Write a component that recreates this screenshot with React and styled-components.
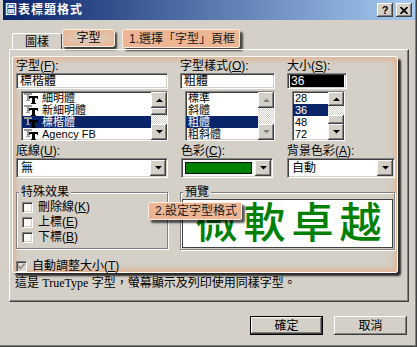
import React from "react";
import styled, { createGlobalStyle, css } from "styled-components";

const GlobalStyle = createGlobalStyle`
  html, body {
    margin: 0;
    padding: 0;
    background: #d4d0c8;
  }
  body {
    font-family: "Liberation Sans", "Noto Sans CJK TC", sans-serif;
    font-size: 12px;
    color: #000;
  }
`;

const raised = css`
  background: #d4d0c8;
  box-shadow: inset -1px -1px #404040, inset 1px 1px #fff,
    inset -2px -2px #808080, inset 2px 2px #d4d0c8;
`;

const sunken = css`
  box-sizing: border-box;
  border-top: 1px solid #808080;
  border-left: 1px solid #808080;
  border-right: 1px solid #fff;
  border-bottom: 1px solid #fff;
  box-shadow: inset 1px 1px #404040, inset -1px -1px #d4d0c8;
`;

const Window = styled.div`
  box-sizing: border-box;
  width: 417px;
  height: 347px;
  padding: 0 1px 0 3px;
  background: #d4d0c8;
  border-right: 1px solid #404040;
  border-bottom: 1px solid #404040;
  box-shadow: inset -1px -1px #808080;
  display: flex;
  flex-direction: column;
`;

const TitleBar = styled.div`
  height: 20px;
  display: flex;
  align-items: center;
  padding: 0 3px 0 2px;
  background: linear-gradient(to right, #0a246a, #a6caf0);
  color: #fff;
  font-weight: bold;
  font-size: 12px;
`;

const TitleText = styled.div`
  flex: 1;
  line-height: 14px;
  letter-spacing: 1px;
`;

const CapBtn = styled.div`
  width: 16px;
  height: 14px;
  margin-left: ${(p) => p.$gap || 0}px;
  ${raised};
  display: flex;
  align-items: center;
  justify-content: center;
  color: #000;
  font: bold 11px "Liberation Sans", sans-serif;
`;

const TabRow = styled.div`
  height: 20px;
  margin-top: 9px;
  margin-left: 9px;
  display: flex;
  align-items: flex-start;
`;

const Tab = styled.div`
  box-sizing: border-box;
  width: 50px;
  height: 17px;
  margin-top: 4px;
  border-top: 1px solid #fff;
  border-left: 1px solid #fff;
  border-right: 1px solid #404040;
  border-radius: 2px 2px 0 0;
  display: flex;
  align-items: center;
  justify-content: center;
  line-height: 12px;
`;

const HotTab = styled.div`
  box-sizing: border-box;
  width: 53px;
  height: 18px;
  border: 1px solid #f6efe8;
  border-radius: 3px;
  background: radial-gradient(ellipse at center, #dccbbd 25%, #ecb08a 100%);
  box-shadow: 2px 3px 2px rgba(0, 0, 0, 0.7);
  display: flex;
  align-items: center;
  justify-content: center;
  line-height: 12px;
`;

const Callout = styled.div`
  box-sizing: border-box;
  width: ${(p) => p.$w}px;
  height: ${(p) => p.$h}px;
  padding-left: 6px;
  background: #edb594;
  border: 1px solid #f8ece2;
  border-radius: 2px;
  box-shadow: 3px 3px 2px rgba(0, 0, 0, 0.65);
  display: flex;
  align-items: center;
  line-height: 12px;
  color: #1a1a1a;
  white-space: nowrap;
`;

const TabCallout = styled(Callout)`
  margin-left: 7px;
`;

const PreviewCallout = styled(Callout)`
  position: absolute;
  left: 132px;
  top: 16px;
  z-index: 2;
`;

const Panel = styled.div`
  box-sizing: border-box;
  width: 400px;
  height: 253px;
  margin-left: 6px;
  padding: 6px 0 0 2px;
  border-top: 1px solid #fff;
  border-left: 1px solid #fff;
  border-right: 1px solid #404040;
  border-bottom: 1px solid #404040;
  box-shadow: inset -1px -1px #808080;
`;

const Frame = styled.div`
  box-sizing: border-box;
  width: 386px;
  height: 217px;
  padding: 3px 0 0 3px;
  border: 1px solid #fff;
  border-radius: 3px;
  box-shadow: inset 0 0 6px 2px rgba(238, 160, 110, 0.7),
    3px 3px 2px rgba(0, 0, 0, 0.8);
`;

const Row = styled.div`
  display: flex;
  gap: ${(p) => p.$gap || 0}px;
  margin-top: ${(p) => p.$mt || 0}px;
  position: relative;
`;

const Col = styled.div`
  width: ${(p) => p.$w}px;
  margin-left: ${(p) => p.$ml || 0}px;
  display: flex;
  flex-direction: column;
`;

const Label = styled.div`
  height: 12px;
  line-height: 12px;
  white-space: nowrap;
`;

const Acc = styled.span`
  text-decoration: underline;
`;

const Field = styled.div`
  ${sunken};
  height: 16px;
  margin-top: 1px;
  padding: 1px 2px;
  background: #fff;
`;

const FieldText = styled.div`
  line-height: 12px;
  height: 12px;
  padding-left: 1px;
  ${(p) =>
    p.$sel &&
    css`
      background: #000;
      color: #fff;
    `}
`;

const ListBox = styled.div`
  ${sunken};
  width: ${(p) => p.$w}px;
  height: 50px;
  margin: 2px 0 0 5px;
  background: #fff;
  display: flex;
`;

const Items = styled.div`
  flex: 1;
  overflow: hidden;
`;

const Item = styled.div`
  height: 12px;
  line-height: 12px;
  font-size: 11px;
  padding-left: 2px;
  display: flex;
  align-items: center;
  gap: 3px;
  white-space: nowrap;
  ${(p) =>
    p.$sel &&
    css`
      background: #0a246a;
      color: #fff;
    `}
`;

const Scroll = styled.div`
  width: 16px;
  flex-shrink: 0;
  display: flex;
  flex-direction: column;
`;

const SBtn = styled.div`
  height: ${(p) => p.$h || 16}px;
  flex-shrink: 0;
  ${raised};
  display: flex;
  align-items: center;
  justify-content: center;
`;

const Track = styled.div`
  flex: ${(p) => (p.$h ? `0 0 ${p.$h}px` : 1)};
  background: repeating-conic-gradient(#d4d0c8 0 25%, #fff 0 50%) 0 0 / 2px
    2px;
`;

const Drop = styled.div`
  ${sunken};
  width: ${(p) => p.$w}px;
  height: 20px;
  margin-top: 1px;
  padding: 1px;
  background: #fff;
  display: flex;
`;

const DropValue = styled.div`
  flex: 1;
  padding-left: 3px;
  line-height: 16px;
`;

const Swatch = styled.div`
  flex: 1;
  margin: 2px 3px 2px 2px;
  background: #008000;
  border: 1px solid #000;
`;

const DropBtn = styled.div`
  width: 16px;
  ${raised};
  display: flex;
  align-items: center;
  justify-content: center;
`;

const Group = styled.fieldset`
  box-sizing: border-box;
  width: ${(p) => p.$w}px;
  height: ${(p) => p.$h}px;
  margin: 0;
  padding: ${(p) => p.$pad};
  border: 1px solid #808080;
  box-shadow: inset 1px 1px #fff, 1px 1px #fff;
`;

const Legend = styled.legend`
  padding: 0 2px;
  margin-left: ${(p) => p.$ml}px;
  line-height: 12px;
  background: #d4d0c8;
`;

const Check = styled.div`
  display: flex;
  align-items: center;
  gap: 5px;
  height: 14px;
  margin-bottom: 1px;
  line-height: 12px;
  white-space: nowrap;
`;

const Box = styled.span`
  ${sunken};
  width: 11px;
  height: 11px;
  flex-shrink: 0;
  background: ${(p) => (p.$off ? "#ddd6cf" : "#fbf7f4")};
  display: flex;
  align-items: center;
  justify-content: center;
`;

const Preview = styled.div`
  box-sizing: border-box;
  height: 49px;
  margin-top: 1px;
  background: #fff;
  border: 1px solid #404040;
  display: flex;
  align-items: center;
  justify-content: center;
  color: #008000;
  font-weight: 500;
  font-size: 42px;
  letter-spacing: 6px;
  line-height: 46px;
  padding-left: 8px;
`;

const Note = styled.div`
  margin: 4px 0 0 3px;
  line-height: 12px;
  white-space: nowrap;
`;

const Latin = styled.span`
  font-family: "Liberation Serif", serif;
`;

const Buttons = styled.div`
  display: flex;
  justify-content: flex-end;
  gap: 11px;
  margin: 14px 8px 0 0;
`;

const Btn = styled.div`
  box-sizing: border-box;
  width: 73px;
  height: 19px;
  ${raised};
  display: flex;
  align-items: center;
  justify-content: center;
  line-height: 12px;
  ${(p) =>
    p.$def &&
    css`
      border: 1px solid #000;
    `}
`;

const Arrow = ({ dir = "up", off }) => (
  <svg width="7" height="4" viewBox="0 0 7 4">
    <polygon
      points={dir === "up" ? "0,4 7,4 3.5,0.5" : "0,0 7,0 3.5,3.5"}
      fill={off ? "#808080" : "#000"}
    />
  </svg>
);

// TrueType logo: a grey T behind a black T
const TTIcon = () => (
  <svg width="15" height="12" viewBox="0 0 15 12" shapeRendering="crispEdges">
    <g fill="#9a9a9a">
      <rect x="0" y="1" width="8" height="2" />
      <rect x="3" y="1" width="2" height="8" />
      <rect x="2" y="8" width="4" height="1" />
    </g>
    <g fill="#000">
      <rect x="5" y="4" width="9" height="2" />
      <rect x="5" y="4" width="1" height="3" />
      <rect x="13" y="4" width="1" height="3" />
      <rect x="8" y="4" width="3" height="7" />
      <rect x="7" y="11" width="5" height="1" />
    </g>
  </svg>
);

const fonts = ["細明體", "新細明體", "標楷體", "Agency FB"];
const styles = ["標準", "斜體", "粗體", "粗斜體"];
const sizes = ["28", "36", "48", "72"];

const CheckRow = ({ label, acc, off, checked }) => (
  <Check>
    <Box $off={off}>
      {checked && (
        <svg width="7" height="7" viewBox="0 0 7 7">
          <path d="M0.5 3 L2.5 5.5 L6.5 1" stroke="#8a8580" strokeWidth="1.5" fill="none" />
        </svg>
      )}
    </Box>
    <span>
      {label}(<Acc>{acc}</Acc>)
    </span>
  </Check>
);

export default function App() {
  return (
    <>
      <GlobalStyle />
      <Window>
        <TitleBar>
          <TitleText>圖表標題格式</TitleText>
          <CapBtn>?</CapBtn>
          <CapBtn $gap={3}>
            <svg width="8" height="7" viewBox="0 0 8 7">
              <path d="M0.5 0 L7.5 7 M7.5 0 L0.5 7" stroke="#000" strokeWidth="1.6" />
            </svg>
          </CapBtn>
        </TitleBar>

        <TabRow>
          <Tab>圖樣</Tab>
          <HotTab>字型</HotTab>
          <TabCallout $w={118} $h={19}>1.選擇「字型」頁框</TabCallout>
        </TabRow>

        <Panel>
          <Frame>
            <Row $gap={12}>
              <Col $w={152}>
                <Label>
                  字型(<Acc>F</Acc>):
                </Label>
                <Field>
                  <FieldText>標楷體</FieldText>
                </Field>
                <ListBox $w={147}>
                  <Items>
                    {fonts.map((f, i) => (
                      <Item key={f} $sel={i === 2}>
                        <TTIcon />
                        <span>{f}</span>
                      </Item>
                    ))}
                  </Items>
                  <Scroll>
                    <SBtn $h={16}>
                      <Arrow dir="up" />
                    </SBtn>
                    <SBtn $h={7} />
                    <Track />
                    <SBtn $h={16}>
                      <Arrow dir="down" />
                    </SBtn>
                  </Scroll>
                </ListBox>
              </Col>

              <Col $w={95}>
                <Label>
                  字型樣式(<Acc>O</Acc>):
                </Label>
                <Field>
                  <FieldText>粗體</FieldText>
                </Field>
                <ListBox $w={90}>
                  <Items>
                    {styles.map((s, i) => (
                      <Item key={s} $sel={i === 2}>
                        {s}
                      </Item>
                    ))}
                  </Items>
                  <Scroll>
                    <SBtn $h={16}>
                      <Arrow dir="up" off />
                    </SBtn>
                    <Track />
                    <SBtn $h={16}>
                      <Arrow dir="down" off />
                    </SBtn>
                  </Scroll>
                </ListBox>
              </Col>

              <Col $w={60}>
                <Label>
                  大小(<Acc>S</Acc>):
                </Label>
                <Field>
                  <FieldText $sel>36</FieldText>
                </Field>
                <ListBox $w={53}>
                  <Items>
                    {sizes.map((s, i) => (
                      <Item key={s} $sel={i === 1}>
                        {s}
                      </Item>
                    ))}
                  </Items>
                  <Scroll>
                    <SBtn $h={14}>
                      <Arrow dir="up" />
                    </SBtn>
                    <Track $h={9} />
                    <SBtn $h={9} />
                    <SBtn $h={16}>
                      <Arrow dir="down" />
                    </SBtn>
                  </Scroll>
                </ListBox>
              </Col>
            </Row>

            <Row $mt={4}>
              <Col $w={152}>
                <Label>
                  底線(<Acc>U</Acc>):
                </Label>
                <Drop $w={152}>
                  <DropValue>無</DropValue>
                  <DropBtn>
                    <Arrow dir="down" />
                  </DropBtn>
                </Drop>
              </Col>
              <Col $w={92} $ml={13}>
                <Label>
                  色彩(<Acc>C</Acc>):
                </Label>
                <Drop $w={92}>
                  <Swatch />
                  <DropBtn>
                    <Arrow dir="down" />
                  </DropBtn>
                </Drop>
              </Col>
              <Col $w={108} $ml={14}>
                <Label>
                  背景色彩(<Acc>A</Acc>):
                </Label>
                <Drop $w={108}>
                  <DropValue>自動</DropValue>
                  <DropBtn>
                    <Arrow dir="down" />
                  </DropBtn>
                </Drop>
              </Col>
            </Row>

            <Row $mt={8} $gap={12}>
              <Group $w={152} $h={63} $pad="2px 5px 0 5px">
                <Legend $ml={-3}>特殊效果</Legend>
                <CheckRow label="刪除線" acc="K" />
                <CheckRow label="上標" acc="E" />
                <CheckRow label="下標" acc="B" />
              </Group>
              <Group $w={215} $h={64} $pad="0 1px 1px 1px">
                <Legend $ml={1}>預覽</Legend>
                <Preview>微軟卓越</Preview>
              </Group>
              <PreviewCallout $w={94} $h={18}>2.設定字型格式</PreviewCallout>
            </Row>

            <Row $mt={9}>
              <CheckRow label="自動調整大小" acc="T" off checked />
            </Row>
          </Frame>

          <Note>
            這是 <Latin>TrueType</Latin> 字型，螢幕顯示及列印使用同樣字型。
          </Note>
        </Panel>

        <Buttons>
          <Btn $def>確定</Btn>
          <Btn>取消</Btn>
        </Buttons>
      </Window>
    </>
  );
}
